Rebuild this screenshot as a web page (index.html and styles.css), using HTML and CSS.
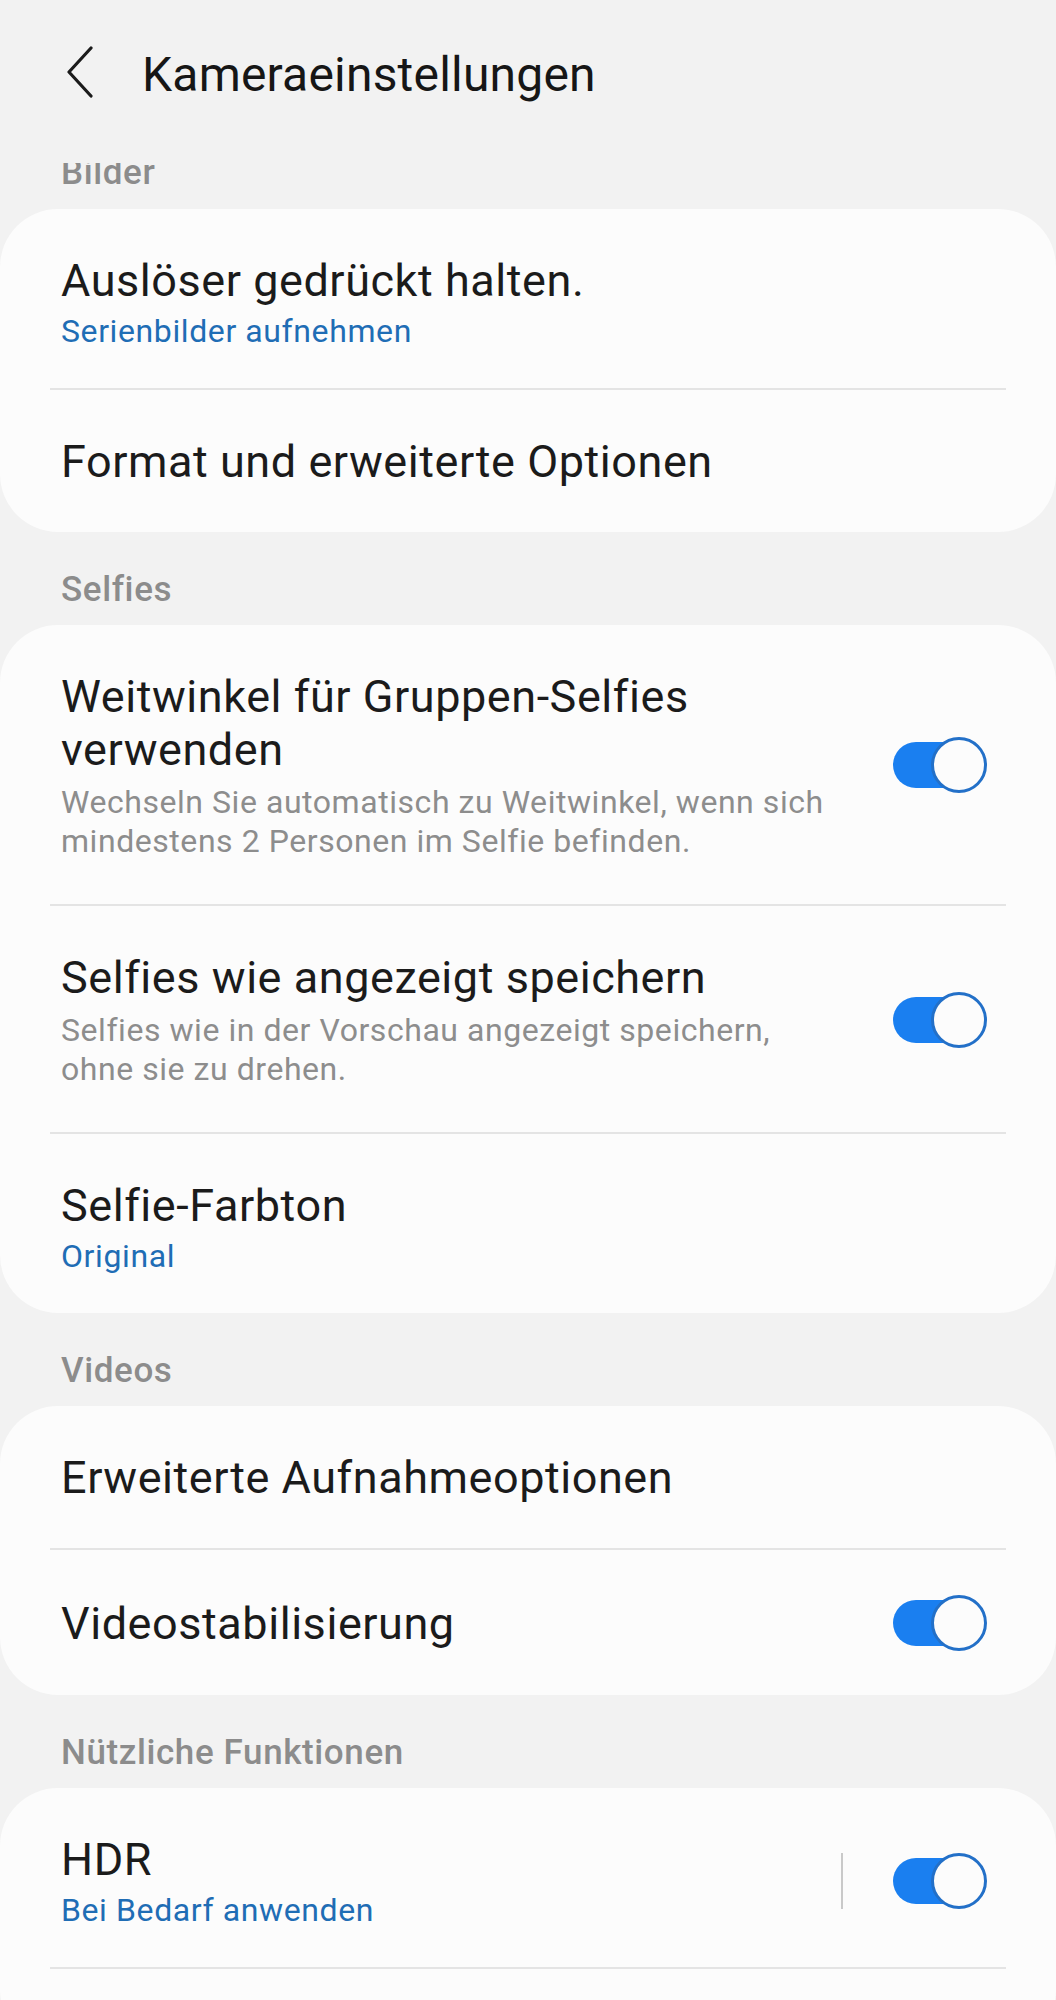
FILE: index.html
```html
<!DOCTYPE html>
<html lang="de">
<head>
<meta charset="utf-8">
<title>Kameraeinstellungen</title>
<link rel="stylesheet" href="styles.css">
</head>
<body>
<div class="screen">
  <header class="appbar">
    <svg class="back" viewBox="0 0 28 52" width="28" height="52" aria-hidden="true">
      <polyline points="25,2 3,26 25,50" fill="none" stroke="#1b1b1b" stroke-width="3.2" stroke-linecap="round" stroke-linejoin="round"/>
    </svg>
    <h1 class="apptitle">Kameraeinstellungen</h1>
  </header>

  <div class="label label-clipped"><span class="label-text">Bilder</span></div>
  <section class="card">
    <div class="item has-sub">
      <div class="text">
        <div class="title">Auslöser gedrückt halten.</div>
        <div class="sub">Serienbilder aufnehmen</div>
      </div>
    </div>
    <div class="divider"></div>
    <div class="item">
      <div class="text">
        <div class="title">Format und erweiterte Optionen</div>
      </div>
    </div>
  </section>

  <div class="label"><span class="label-text">Selfies</span></div>
  <section class="card">
    <div class="item has-desc">
      <div class="text">
        <div class="title">Weitwinkel für Gruppen-Selfies verwenden</div>
        <div class="desc">Wechseln Sie automatisch zu Weitwinkel, wenn sich<br>mindestens 2 Personen im Selfie befinden.</div>
      </div>
      <div class="toggle"><span class="knob"></span></div>
    </div>
    <div class="divider"></div>
    <div class="item has-desc">
      <div class="text">
        <div class="title">Selfies wie angezeigt speichern</div>
        <div class="desc">Selfies wie in der Vorschau angezeigt speichern,<br>ohne sie zu drehen.</div>
      </div>
      <div class="toggle"><span class="knob"></span></div>
    </div>
    <div class="divider"></div>
    <div class="item has-sub">
      <div class="text">
        <div class="title">Selfie-Farbton</div>
        <div class="sub">Original</div>
      </div>
    </div>
  </section>

  <div class="label"><span class="label-text">Videos</span></div>
  <section class="card">
    <div class="item">
      <div class="text">
        <div class="title">Erweiterte Aufnahmeoptionen</div>
      </div>
    </div>
    <div class="divider"></div>
    <div class="item">
      <div class="text">
        <div class="title">Videostabilisierung</div>
      </div>
      <div class="toggle"><span class="knob"></span></div>
    </div>
  </section>

  <div class="label"><span class="label-text">Nützliche Funktionen</span></div>
  <section class="card card-last">
    <div class="item has-sub">
      <div class="text">
        <div class="title">HDR</div>
        <div class="sub">Bei Bedarf anwenden</div>
      </div>
      <div class="vsep"></div>
      <div class="toggle"><span class="knob"></span></div>
    </div>
    <div class="divider"></div>
    <div class="filler"></div>
  </section>
</div>
</body>
</html>
```

FILE: styles.css
```css
html, body {
  margin: 0;
  padding: 0;
}

body {
  background: #f2f2f2;
  font-family: Roboto, "Noto Sans", "Liberation Sans", sans-serif;
  color: #1b1b1b;
  width: 1056px;
  height: 2000px;
  overflow: hidden;
}

.screen {
  width: 1056px;
}

.appbar {
  height: 163px;
  display: flex;
  align-items: flex-start;
  padding-left: 66px;
  box-sizing: border-box;
}

.back {
  margin-top: 46px;
  flex: none;
}

.apptitle {
  margin: 47px 0 0 48px;
  font-size: 48px;
  line-height: 56px;
  font-weight: 400;
  letter-spacing: 0.2px;
  color: #161616;
}

.label {
  padding: 38px 0 15px 61px;
}

.label-text {
  display: block;
  font-size: 35px;
  line-height: 40px;
  font-weight: 500;
  letter-spacing: 0.6px;
  color: #8c8c8c;
}

.label-clipped {
  padding-top: 0;
  padding-bottom: 16px;
}

.label-clipped .label-text {
  height: 30px;
  overflow: hidden;
  line-height: 40px;
}

.label-clipped .label-text::before {
  content: "";
  display: block;
  margin-top: -10px;
}

.card {
  background: #fcfcfc;
  border-radius: 58px;
  overflow: hidden;
}

.card-last {
  min-height: 260px;
}

.item {
  display: flex;
  align-items: center;
  padding: 45px 0 44px 61px;
}

.item.has-sub {
  padding-bottom: 38px;
}

.item.has-desc {
  padding-bottom: 44px;
}

.text {
  flex: 1;
  min-width: 0;
  padding-right: 30px;
}

.title {
  font-size: 45px;
  line-height: 53px;
  letter-spacing: 0.55px;
  color: #1b1b1b;
}

.sub {
  margin-top: 5px;
  font-size: 32px;
  line-height: 38px;
  letter-spacing: 0.6px;
  color: #1f6db5;
}

.desc {
  margin-top: 7px;
  font-size: 32px;
  line-height: 38.5px;
  letter-spacing: 0.55px;
  color: #8d8d8d;
}

.divider {
  height: 2px;
  margin: 0 50px;
  background: #e4e4e4;
}

.toggle {
  position: relative;
  flex: none;
  width: 94px;
  height: 56px;
  margin-right: 69px;
}

.toggle::before {
  content: "";
  position: absolute;
  left: 0;
  top: 5px;
  width: 80px;
  height: 46px;
  border-radius: 23px;
  background: #1a7ff0;
}

.knob {
  position: absolute;
  right: 0;
  top: 0;
  width: 56px;
  height: 56px;
  box-sizing: border-box;
  border-radius: 50%;
  border: 3px solid #2370c8;
  background: #fcfcfc;
}

.vsep {
  flex: none;
  width: 2px;
  height: 56px;
  background: #c9c9c9;
  margin-right: 50px;
}

.filler {
  height: 40px;
}
```
